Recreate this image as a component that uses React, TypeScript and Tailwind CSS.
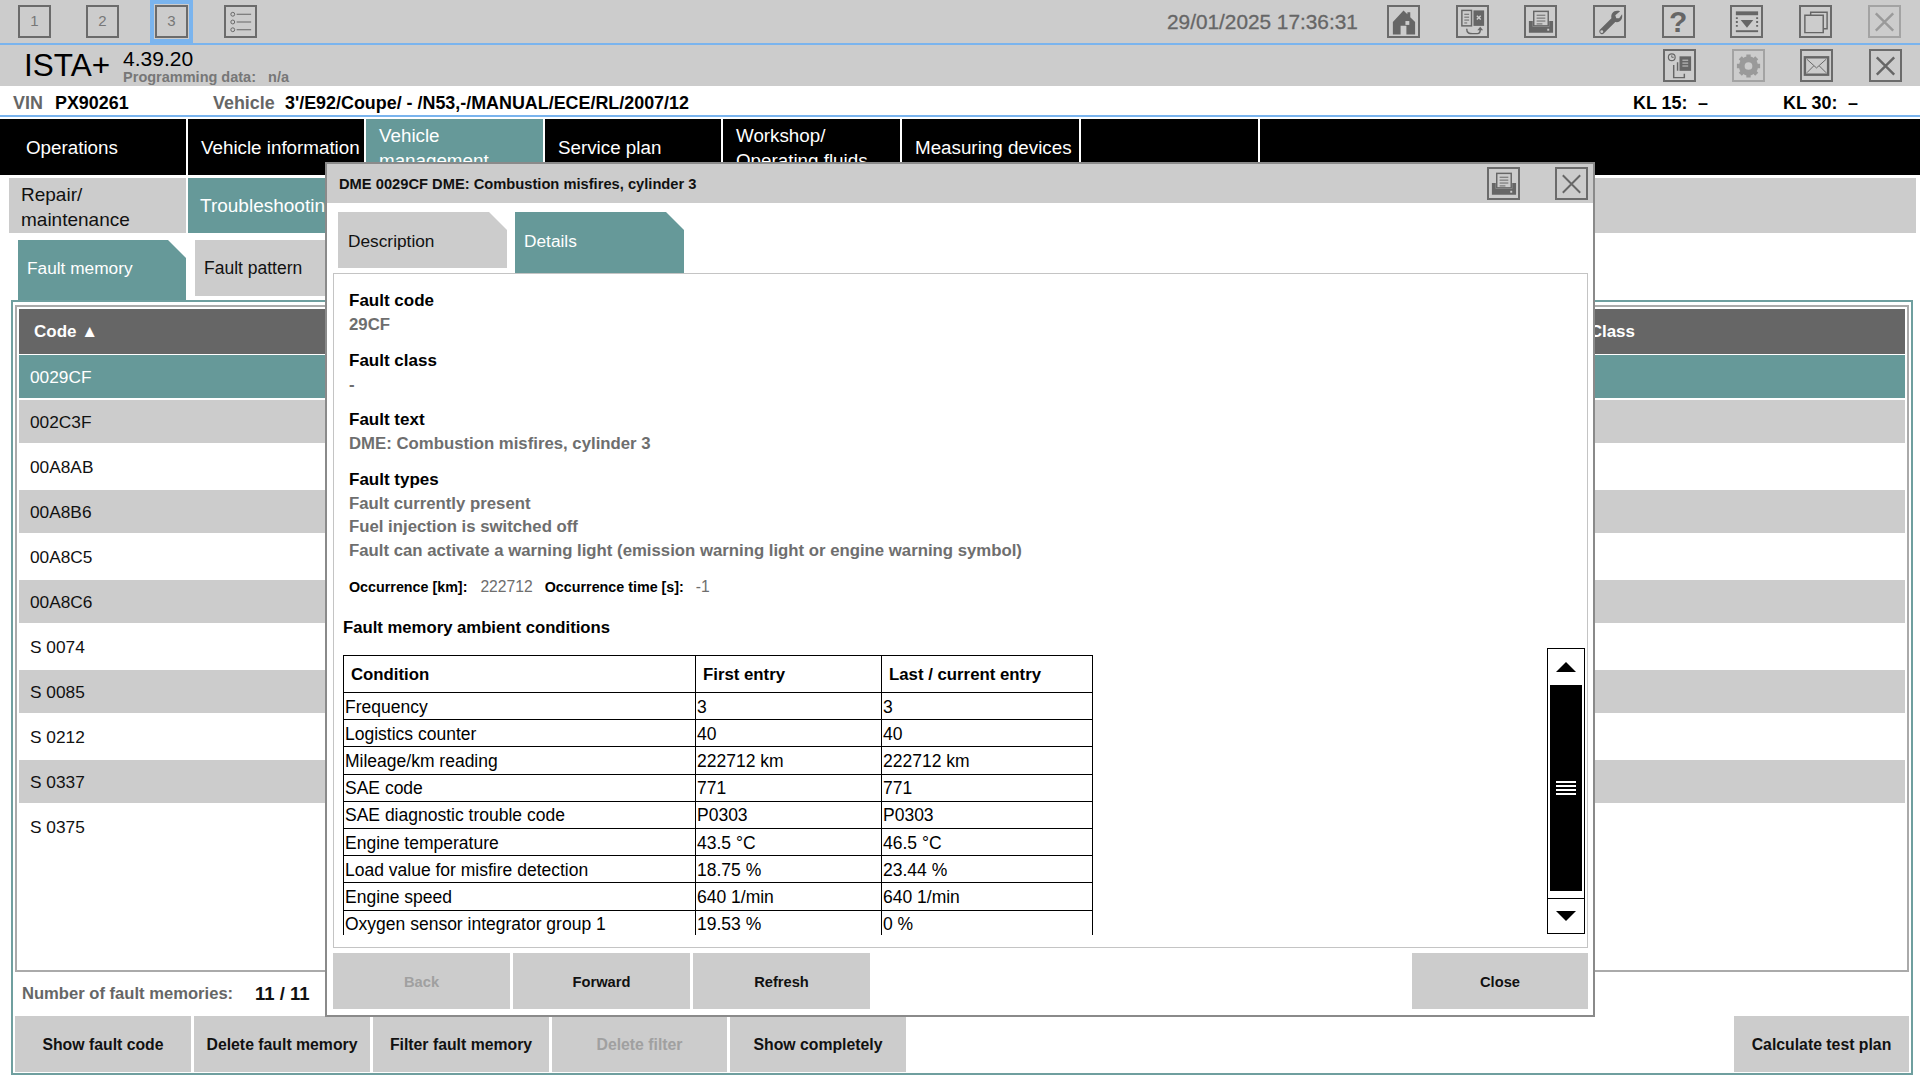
import type { ReactNode } from "react"

const faultRows = [
  "0029CF",
  "002C3F",
  "00A8AB",
  "00A8B6",
  "00A8C5",
  "00A8C6",
  "S 0074",
  "S 0085",
  "S 0212",
  "S 0337",
  "S 0375",
]

const conditions = [
  ["Frequency", "3", "3"],
  ["Logistics counter", "40", "40"],
  ["Mileage/km reading", "222712 km", "222712 km"],
  ["SAE code", "771", "771"],
  ["SAE diagnostic trouble code", "P0303", "P0303"],
  ["Engine temperature", "43.5 °C", "46.5 °C"],
  ["Load value for misfire detection", "18.75 %", "23.44 %"],
  ["Engine speed", "640 1/min", "640 1/min"],
  ["Oxygen sensor integrator group 1", "19.53 %", "0 %"],
]

function IconBox({ children, dim }: { children: ReactNode; dim?: boolean }) {
  return (
    <div
      className={`flex h-[33px] w-[33px] shrink-0 items-center justify-center border-2 ${
        dim ? "border-[#a3a3a3] text-[#9a9a9a]" : "border-[#6b6b6b] text-[#666666]"
      }`}
    >
      {children}
    </div>
  )
}

function Svg({ children }: { children: ReactNode }) {
  return (
    <svg viewBox="0 0 30 30" className="h-[30px] w-[30px]" fill="none" stroke="currentColor">
      {children}
    </svg>
  )
}

function HomeIcon() {
  return (
    <Svg>
      <path d="M15 3 L19 7 V5 H22 V10 L27 15 V28 H18 V19 H12 V28 H4 V15 Z" fill="currentColor" stroke="none" />
      <rect x="17" y="14" width="4" height="4" fill="#cccccc" stroke="none" />
    </Svg>
  )
}

function SwapIcon() {
  return (
    <Svg>
      <rect x="4" y="3" width="10" height="16" strokeWidth="1.5" />
      <path d="M6.5 7h5M6.5 10h5M6.5 13h5M6.5 16h3" strokeWidth="1" />
      <rect x="16" y="3" width="11" height="16" fill="currentColor" stroke="none" />
      <path d="M19.5 8.5l4 4M23.5 8.5l-4 4" stroke="#cccccc" strokeWidth="1.5" />
      <path d="M9 22c0 5 3 5 6 5h5c2 0 3-1 3-4" strokeWidth="1.5" />
      <path d="M20 23.500h6l-3-3.500z" fill="currentColor" stroke="none" />
    </Svg>
  )
}

function PrintIcon() {
  return (
    <Svg>
      <rect x="8" y="4" width="15" height="15" fill="#cccccc" strokeWidth="1.5" />
      <path d="M11 8h9M11 11h9M11 14h9M11 17h6" strokeWidth="1" />
      <path d="M3 14h4v6h17v-6h4v12H3z" fill="currentColor" stroke="none" />
      <rect x="22" y="22" width="2" height="2" fill="#cccccc" stroke="none" />
    </Svg>
  )
}

function WrenchIcon() {
  return (
    <Svg>
      <path
        d="M26 4 L21 8 L22 11 L25 11 L28 7 C29 12 26 16 21 15 L9 27 C7 29 3 26 5 23 L17 11 C16 6 20 2 26 4 Z"
        fill="currentColor"
        stroke="none"
      />
      <circle cx="7" cy="25" r="1.500" fill="#cccccc" stroke="none" />
    </Svg>
  )
}

function DownloadBarIcon() {
  return (
    <Svg>
      <rect x="4" y="4" width="23" height="4" fill="currentColor" stroke="none" />
      <path d="M9 13h13l-6.500 8z" fill="currentColor" stroke="none" />
      <path d="M4 24.500h23" strokeWidth="2" />
      <path d="M5 10v12M26 10v12" strokeWidth="2" strokeDasharray="2 2" />
    </Svg>
  )
}

function WindowsIcon() {
  return (
    <Svg>
      <path d="M10 8V5h17v17h-4" strokeWidth="1.500" />
      <path d="M7 8h16v18H4V8z" strokeWidth="1.500" />
    </Svg>
  )
}

function CrossIcon({ size = 2.5 }: { size?: number }) {
  return (
    <Svg>
      <path d="M6 6l18 18M24 6L6 24" strokeWidth={size} />
    </Svg>
  )
}

function DocsIcon() {
  return (
    <Svg>
      <circle cx="7" cy="6" r="3.500" strokeWidth="1.200" />
      <path d="M7 4v2h2" strokeWidth="1" />
      <rect x="15" y="5" width="12" height="15" fill="currentColor" stroke="none" />
      <path d="M18 9h6M18 12h6M18 15h6" stroke="#cccccc" strokeWidth="1" />
      <path d="M13 11v9M9 14v13h11v-4" strokeWidth="1.500" />
    </Svg>
  )
}

function GearIcon() {
  return (
    <Svg>
      <circle cx="15" cy="15" r="7" strokeWidth="6" />
      <path
        d="M15 3v24M3 15h24M6.500 6.500l17 17M23.500 6.500l-17 17"
        strokeWidth="4.500"
        strokeDasharray="3.500 17 3.500 0"
      />
    </Svg>
  )
}

function MailIcon() {
  return (
    <Svg>
      <rect x="3" y="6" width="24" height="18" strokeWidth="2.500" />
      <path d="M5 8l10 9 10-9M5 22l7-7M25 22l-7-7" strokeWidth="1" />
    </Svg>
  )
}

function ListIcon() {
  return (
    <Svg>
      <circle cx="7" cy="7" r="2" strokeWidth="1" />
      <circle cx="7" cy="15" r="2" strokeWidth="1" />
      <circle cx="7" cy="23" r="2" strokeWidth="1" />
      <path d="M11 7h15M11 15h15M11 23h15" strokeWidth="1.200" />
    </Svg>
  )
}

function NumberBox({ n }: { n: string }) {
  return (
    <IconBox>
      <span className="text-[15px] text-[#777777]">{n}</span>
    </IconBox>
  )
}

function NavCell({ children, active, className }: { children: ReactNode; active?: boolean; className: string }) {
  return (
    <div
      className={`flex h-full items-center overflow-hidden pl-[13px] text-[18.800px] leading-[25px] text-white ${
        active ? "bg-[#669999]" : "bg-black"
      } ${className}`}
    >
      {children}
    </div>
  )
}

function GrayButton({
  children,
  disabled,
  className,
}: {
  children: ReactNode
  disabled?: boolean
  className: string
}) {
  return (
    <div
      className={`flex items-center justify-center bg-[#cccccc] pt-[2px] font-bold ${
        disabled ? "text-[#a0a0a0]" : "text-[#111111]"
      } ${className}`}
    >
      {children}
    </div>
  )
}

function Field({ label, children }: { label: string; children: ReactNode }) {
  return (
    <div className="mb-[12px]">
      <div className="text-[17px] leading-[24px] font-bold text-black">{label}</div>
      <div className="text-[16.750px] leading-[23.500px] font-bold text-[#6e6e6e]">{children}</div>
    </div>
  )
}

function Modal() {
  return (
    <div className="absolute top-[162px] left-[325px] flex h-[855px] w-[1270px] flex-col border-2 border-[#8a8a8a] bg-white">
      <div className="flex h-[39px] shrink-0 items-center bg-[#cccccc] pr-[5px] pl-[12px]">
        <span className="flex-1 pt-[1px] text-[14.700px] font-bold text-[#111111]">
          DME 0029CF DME: Combustion misfires, cylinder 3
        </span>
        <IconBox>
          <PrintIcon />
        </IconBox>
        <div className="ml-[35px]">
          <IconBox>
            <CrossIcon size={2} />
          </IconBox>
        </div>
      </div>

      <div className="flex h-[70px] shrink-0 gap-[8px] pt-[9px] pr-[10px] pl-[11px]">
        <div className="flex h-[56px] w-[169px] items-center bg-[#cccccc] pt-[3px] pl-[10px] text-[17.300px] text-[#111111] [clip-path:polygon(0_0,calc(100%_-_18px)_0,100%_18px,100%_100%,0_100%)]">
          Description
        </div>
        <div className="flex h-[61px] w-[169px] items-center bg-[#669999] pb-[2px] pl-[9px] text-[17.300px] text-white [clip-path:polygon(0_0,calc(100%_-_18px)_0,100%_18px,100%_100%,0_100%)]">
          Details
        </div>
      </div>

      <div className="mr-[5px] ml-[6px] flex h-[675px] shrink-0 border border-[#c4c4c4] pr-[2px]">
        <div className="min-w-0 flex-1 overflow-hidden pt-[15px]">
          <div className="pl-[15px]">
            <Field label="Fault code">29CF</Field>
            <Field label="Fault class">-</Field>
            <Field label="Fault text">DME: Combustion misfires, cylinder 3</Field>
            <div className="text-[17px] leading-[24px] font-bold text-black">Fault types</div>
            <div className="text-[16.750px] leading-[23.500px] font-bold text-[#6e6e6e]">
              <div>Fault currently present</div>
              <div>Fuel injection is switched off</div>
              <div>Fault can activate a warning light (emission warning light or engine warning symbol)</div>
            </div>
            <div className="mt-[14px] flex items-baseline text-[14.300px] leading-[22px] font-bold text-black">
              <span>Occurrence [km]:</span>
              <span className="ml-[13px] text-[15.700px] font-normal text-[#6e6e6e]">222712</span>
              <span className="ml-[12px]">Occurrence time [s]:</span>
              <span className="ml-[12px] text-[15.700px] font-normal text-[#6e6e6e]">-1</span>
            </div>
          </div>
          <div className="mt-[18px] pl-[9px] text-[16.700px] leading-[24px] font-bold text-black">
            Fault memory ambient conditions
          </div>
          <div className="mt-[15px] ml-[9px] h-[280px] w-[751px] overflow-hidden">
            <table className="w-[750px] table-fixed border-collapse border border-black text-[17.500px] leading-[20px] text-black">
              <thead>
                <tr className="h-[37px] text-left text-[16.800px] font-bold">
                  <th className="w-[352px] border border-black pt-[2px] pl-[7px]">Condition</th>
                  <th className="w-[186px] border border-black pt-[2px] pl-[7px]">First entry</th>
                  <th className="border border-black pt-[2px] pl-[7px]">Last / current entry</th>
                </tr>
              </thead>
              <tbody>
                {conditions.map((row) => (
                  <tr key={row[0]} className="h-[27.200px]">
                    {row.map((cell, i) => (
                      <td key={i} className="border border-black pt-[1px] pl-[1px] whitespace-nowrap">
                        {cell}
                      </td>
                    ))}
                  </tr>
                ))}
              </tbody>
            </table>
          </div>
        </div>

        <div className="mt-[374px] flex h-[286px] w-[38px] shrink-0 flex-col border border-black bg-white">
          <div className="flex h-[36px] shrink-0 items-center justify-center">
            <div className="h-0 w-0 border-x-[10px] border-b-[10px] border-x-transparent border-b-black" />
          </div>
          <div className="mx-[2px] flex h-[206px] shrink-0 flex-col items-center justify-center gap-[2px] bg-black">
            <div className="h-[2px] w-[20px] bg-white" />
            <div className="h-[2px] w-[20px] bg-white" />
            <div className="h-[2px] w-[20px] bg-white" />
            <div className="h-[2px] w-[20px] bg-white" />
          </div>
          <div className="mt-[7px] flex flex-1 items-center justify-center border-t border-black">
            <div className="h-0 w-0 border-x-[10px] border-t-[10px] border-x-transparent border-t-black" />
          </div>
        </div>
      </div>

      <div className="mt-[5px] flex gap-[3px] pr-[5px] pl-[6px] text-[14.700px]">
        <GrayButton disabled className="h-[56px] w-[177px]">
          Back
        </GrayButton>
        <GrayButton className="h-[56px] w-[177px]">Forward</GrayButton>
        <GrayButton className="h-[56px] w-[177px]">Refresh</GrayButton>
        <GrayButton className="ml-auto h-[56px] w-[176px]">Close</GrayButton>
      </div>
    </div>
  )
}

export default function App() {
  return (
    <div className="relative h-[1080px] w-[1920px] overflow-hidden bg-white font-['Liberation_Sans',sans-serif]">
      <div className="flex h-[43px] items-center bg-[#cccccc] pl-[18px]">
        <NumberBox n="1" />
        <div className="ml-[35px]">
          <NumberBox n="2" />
        </div>
        <div className="ml-[31px] border-[4px] border-[#7ab4ee] p-[1px]">
          <NumberBox n="3" />
        </div>
        <div className="ml-[31px]">
          <IconBox>
            <ListIcon />
          </IconBox>
        </div>
        <div className="ml-[910px] w-[220px] text-[20.800px] text-[#666666] [-webkit-text-stroke:0.3px]">
          29/01/2025 17:36:31
        </div>
        <div className="flex gap-[35.700px]">
          <IconBox>
            <HomeIcon />
          </IconBox>
          <IconBox>
            <SwapIcon />
          </IconBox>
          <IconBox>
            <PrintIcon />
          </IconBox>
          <IconBox>
            <WrenchIcon />
          </IconBox>
          <IconBox>
            <span className="text-[30px] leading-none font-bold text-[#666666]">?</span>
          </IconBox>
          <IconBox>
            <DownloadBarIcon />
          </IconBox>
          <IconBox>
            <WindowsIcon />
          </IconBox>
          <IconBox dim>
            <CrossIcon />
          </IconBox>
        </div>
      </div>
      <div className="h-[2px] bg-[#7ab4ee]" />

      <div className="flex h-[41px] items-center bg-[#cccccc] pr-[18px] pl-[24px]">
        <span className="pt-[1px] text-[31.500px] leading-none text-black">ISTA+</span>
        <div className="ml-[13px] flex flex-col pt-[2px]">
          <span className="text-[21px] leading-[20px] text-black">4.39.20</span>
          <span className="text-[14.500px] leading-[16px] font-bold text-[#777777]">
            Programming data:&nbsp;&nbsp; n/a
          </span>
        </div>
        <div className="ml-auto flex gap-[35.700px]">
          <IconBox>
            <DocsIcon />
          </IconBox>
          <IconBox dim>
            <GearIcon />
          </IconBox>
          <IconBox>
            <MailIcon />
          </IconBox>
          <IconBox>
            <CrossIcon />
          </IconBox>
        </div>
      </div>

      <div className="flex h-[29px] items-center bg-white pt-[6px] pl-[13px] text-[17.900px] font-bold">
        <span className="w-[42px] text-[#666666]">VIN</span>
        <span className="w-[158px] text-black">PX90261</span>
        <span className="w-[72px] text-[#666666]">Vehicle</span>
        <span className="w-[1348px] text-black">3'/E92/Coupe/ - /N53,-/MANUAL/ECE/RL/2007/12</span>
        <span className="w-[65px] text-black">KL 15:</span>
        <span className="w-[85px] text-black">–</span>
        <span className="w-[65px] text-black">KL 30:</span>
        <span className="text-black">–</span>
      </div>
      <div className="h-[2px] bg-[#7ab4ee]" />

      <div className="mt-[2px] flex h-[56px] gap-[2px]">
        <NavCell className="w-[186px] pl-[26px]">Operations</NavCell>
        <NavCell className="w-[176px]">Vehicle information</NavCell>
        <NavCell active className="w-[177px] items-start">
          <span className="pt-[4px]">
            Vehicle
            <br />
            management
          </span>
        </NavCell>
        <NavCell className="w-[176px]">Service plan</NavCell>
        <NavCell className="w-[177px] items-start">
          <span className="pt-[4px]">
            Workshop/
            <br />
            Operating fluids
          </span>
        </NavCell>
        <NavCell className="w-[177px]">Measuring devices</NavCell>
        <NavCell className="w-[177px]">{""}</NavCell>
        <NavCell className="flex-1">{""}</NavCell>
      </div>

      <div className="mt-[3px] flex h-[55px] gap-[2px] pr-[4px] pl-[9px]">
        <div className="flex w-[177px] items-center bg-[#cccccc] pt-[2px] pl-[12px] text-[19px] leading-[25px] text-[#111111]">
          Repair/
          <br />
          maintenance
        </div>
        <div className="flex w-[176px] items-center bg-[#669999] pt-[2px] pl-[12px] text-[19px] whitespace-nowrap text-white">
          Troubleshooting
        </div>
        <div className="flex-1 bg-[#cccccc]" />
      </div>

      <div className="mt-[7px] flex h-[60px] gap-[9px] pl-[18px]">
        <div className="flex w-[168px] items-center bg-[#669999] pb-[3px] pl-[9px] text-[17.300px] text-white [clip-path:polygon(0_0,calc(100%_-_18px)_0,100%_18px,100%_100%,0_100%)]">
          Fault memory
        </div>
        <div className="flex h-[56px] w-[168px] items-center bg-[#cccccc] pl-[9px] text-[17.500px] text-[#111111]">
          Fault pattern
        </div>
      </div>

      <div className="mx-[11px] flex h-[775px] w-[1902px] flex-col border-2 border-[#6f9f9f] bg-white pt-[3px]">
        <div className="mx-[2px] h-[667px] border-2 border-[#aaaaaa] p-[2px]">
          <div className="flex h-[45px] items-center justify-between bg-[#666666] pt-[1px] pr-[270px] pl-[15px] text-[17px] font-bold text-white">
            <span>Code ▲</span>
            <span>Class</span>
          </div>
          <div className="mt-[1px] flex flex-col gap-[2px]">
            {faultRows.map((code, i) => (
              <div
                key={code}
                className={`flex h-[43px] items-center pt-[3px] pl-[11px] text-[17.300px] ${
                  i === 0
                    ? "bg-[#669999] text-white"
                    : i % 2 === 1
                      ? "bg-[#cccccc] text-[#111111]"
                      : "bg-white text-[#111111]"
                }`}
              >
                {code}
              </div>
            ))}
          </div>
        </div>
        <div className="flex h-[44px] items-center pl-[9px] text-[16.600px] font-bold">
          <span className="w-[233px] text-[#666666]">Number of fault memories:</span>
          <span className="text-[18.500px] text-[#111111]">11 / 11</span>
        </div>
        <div className="flex gap-[3px] px-[2px] text-[15.800px]">
          <GrayButton className="h-[56px] w-[176px]">Show fault code</GrayButton>
          <GrayButton className="h-[56px] w-[176px]">Delete fault memory</GrayButton>
          <GrayButton className="h-[56px] w-[176px]">Filter fault memory</GrayButton>
          <GrayButton disabled className="h-[56px] w-[175px]">
            Delete filter
          </GrayButton>
          <GrayButton className="h-[56px] w-[176px]">Show completely</GrayButton>
          <GrayButton className="ml-auto h-[56px] w-[175px]">Calculate test plan</GrayButton>
        </div>
      </div>

      <Modal />
    </div>
  )
}
